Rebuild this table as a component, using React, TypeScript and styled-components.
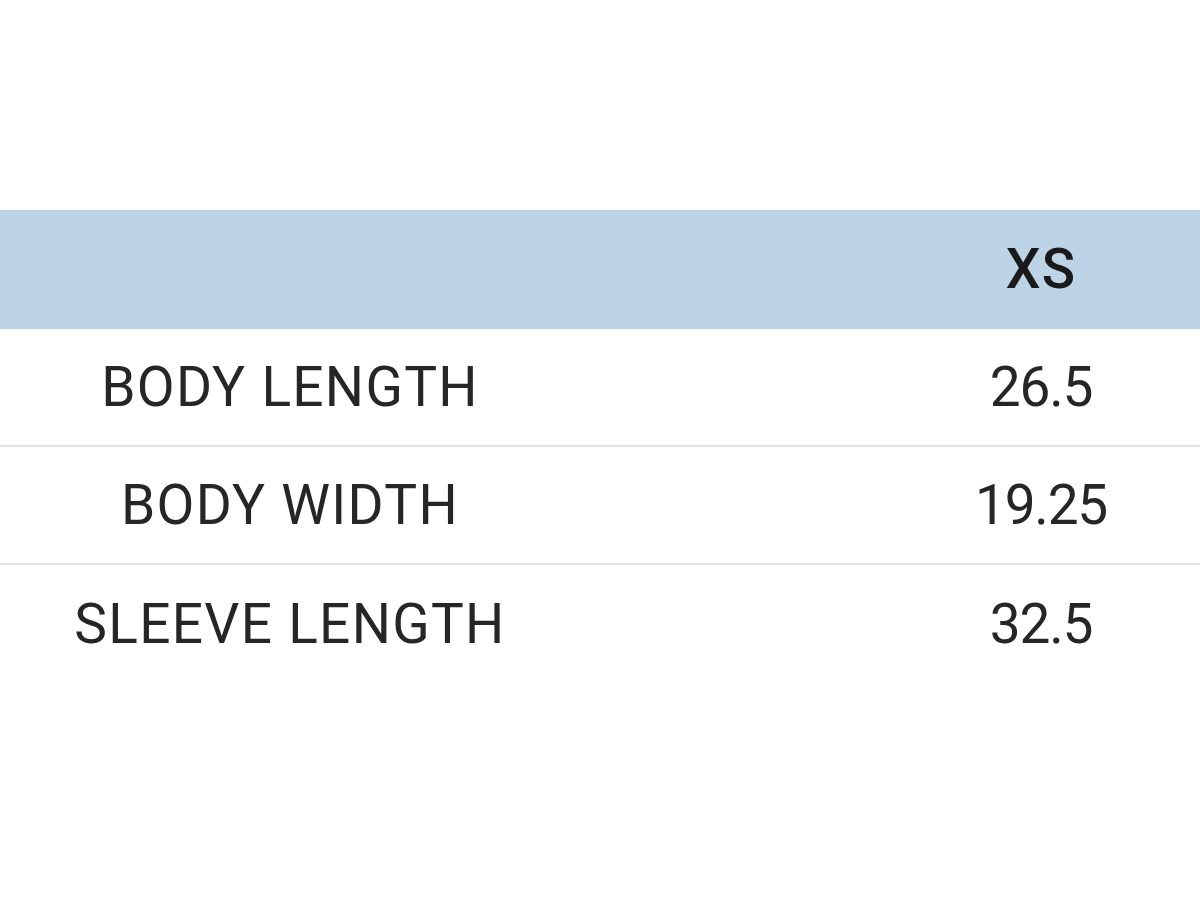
import React from "react";
import styled, { createGlobalStyle } from "styled-components";

const Global = createGlobalStyle`
  html, body { margin: 0; padding: 0; background: #ffffff; }
  body { font-family: Roboto, "Liberation Sans", Arial, sans-serif; color: #222222; }
`;

const Page = styled.div`
  width: 1200px;
  height: 900px;
  padding-top: 210px;
  box-sizing: border-box;
  overflow: hidden;
`;

const Table = styled.div`
  display: flex;
  flex-direction: column;
`;

const Row = styled.div<{ $header?: boolean; $last?: boolean }>`
  display: grid;
  grid-template-columns: 580px 1fr 318px;
  align-items: center;
  height: ${(p) => (p.$header ? 119 : 118)}px;
  box-sizing: border-box;
  background: ${(p) => (p.$header ? "#bdd4e6" : "#ffffff")};
  border-bottom: ${(p) => (p.$header || p.$last ? "none" : "2px solid #e3e3e3")};
`;

const Cell = styled.div<{ $header?: boolean; $numeric?: boolean }>`
  text-align: center;
  font-size: 55px;
  letter-spacing: ${(p) => (p.$numeric ? "-1.2px" : "1.3px")};
  font-weight: ${(p) => (p.$header ? 500 : 400)};
  color: ${(p) => (p.$header ? "#1a1a1a" : "#262626")};
  white-space: nowrap;
  line-height: 1;
`;

const rows = [
  ["BODY LENGTH", "26.5"],
  ["BODY WIDTH", "19.25"],
  ["SLEEVE LENGTH", "32.5"],
];

export default function App() {
  return (
    <>
      <Global />
      <Page>
        <Table>
          <Row $header>
            <Cell $header />
            <Cell $header />
            <Cell $header>XS</Cell>
          </Row>
          {rows.map(([label, value], i) => (
            <Row key={label} $last={i === rows.length - 1}>
              <Cell>{label}</Cell>
              <Cell />
              <Cell $numeric>{value}</Cell>
            </Row>
          ))}
        </Table>
      </Page>
    </>
  );
}
